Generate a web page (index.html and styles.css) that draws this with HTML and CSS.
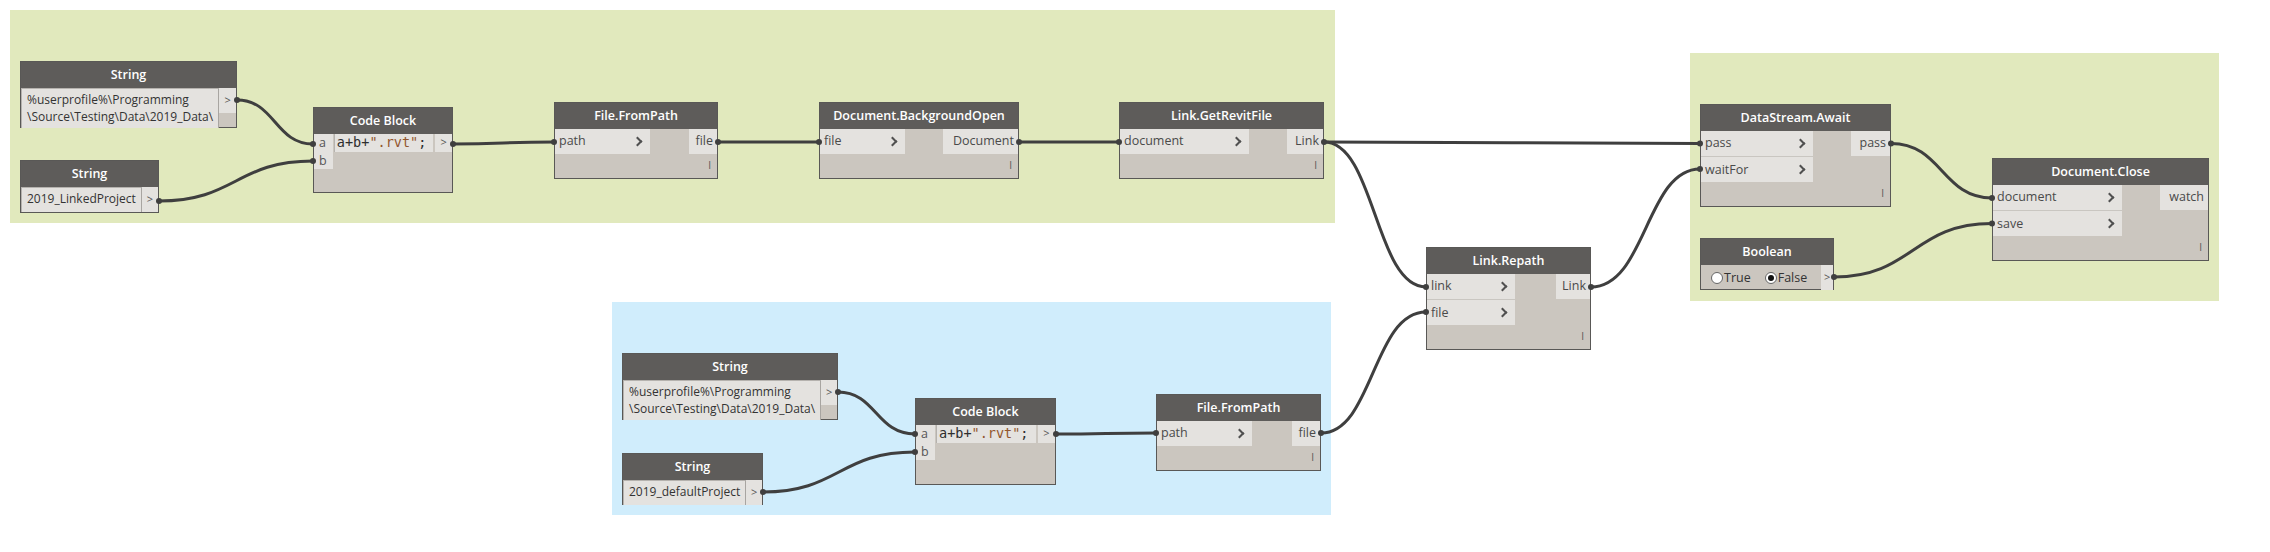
FILE: index.html
```html
<!DOCTYPE html>
<html lang="en">
<head>
    <meta charset="UTF-8">
    <title>Dynamo - Link Repath</title>
    <link rel="stylesheet" href="styles.css">
</head>
<body>
    <div class="canvas">
        <!-- groups -->
        <div class="group green group-main"></div>
        <div class="group green group-close"></div>
        <div class="group blue group-default"></div>

        <!-- wires -->
        <svg class="wires" width="2270" height="552" viewBox="0 0 2270 552">
            <g fill="none" stroke="#3f3f3f" stroke-width="3">
                <path d="M237 100 C275 100 275 144 313 144"/>
                <path d="M159 201 C236 201 236 161 313 161"/>
                <path d="M453 144 C503 144 504 142 554 142"/>
                <path d="M718 142 L819 142"/>
                <path d="M1019 142 L1119 142"/>
                <path d="M1324 142 C1512 142 1512 143.5 1700 143.5"/>
                <path d="M1324 142 C1375 142 1375 287 1426 287"/>
                <path d="M1321 433 C1373 433 1373 312 1426 312"/>
                <path d="M1591 287 C1646 287 1646 169 1700 169"/>
                <path d="M1891 143.5 C1942 143.5 1942 198 1992 198"/>
                <path d="M1834 277 C1913 277 1913 223.5 1992 223.5"/>
                <path d="M838 392 C876 392 876 434 915 434"/>
                <path d="M763 492 C839 492 839 452 915 452"/>
                <path d="M1056 434 C1106 434 1106 433 1156 433"/>
            </g>
        </svg>

        <!-- top row -->
        <div class="node str1">
            <div class="node-title">String</div>
            <div class="str-body">
                <div class="str-value">%userprofile%\Programming<br>\Source\Testing\Data\2019_Data\</div>
                <div class="str-out"><span>&gt;</span></div>
            </div>
        </div>

        <div class="node str2">
            <div class="node-title">String</div>
            <div class="str-body">
                <div class="str-value">2019_LinkedProject</div>
                <div class="str-out"><span>&gt;</span></div>
            </div>
        </div>

        <div class="node cb1">
            <div class="node-title">Code Block</div>
            <div class="cb-body">
                <div class="cb-ports">
                    <div class="cb-port">a</div>
                    <div class="cb-port">b</div>
                </div>
                <div class="cb-code">a+b+<span class="str">".rvt"</span>;</div>
                <div class="cb-out">&gt;</div>
            </div>
        </div>

        <div class="node ffp1">
            <div class="node-title">File.FromPath</div>
            <div class="node-body">
                <div class="inputs">
                    <div class="port">path<i class="chev"></i></div>
                </div>
                <div class="outputs"><div class="port out">file</div></div>
            </div>
            <div class="node-foot">I</div>
        </div>

        <div class="node dbo">
            <div class="node-title">Document.BackgroundOpen</div>
            <div class="node-body">
                <div class="inputs">
                    <div class="port">file<i class="chev"></i></div>
                </div>
                <div class="outputs"><div class="port out">Document</div></div>
            </div>
            <div class="node-foot">I</div>
        </div>

        <div class="node lgrf">
            <div class="node-title">Link.GetRevitFile</div>
            <div class="node-body">
                <div class="inputs">
                    <div class="port">document<i class="chev"></i></div>
                </div>
                <div class="outputs"><div class="port out">Link</div></div>
            </div>
            <div class="node-foot">I</div>
        </div>

        <!-- middle -->
        <div class="node repath">
            <div class="node-title">Link.Repath</div>
            <div class="node-body">
                <div class="inputs">
                    <div class="port">link<i class="chev"></i></div>
                    <div class="port">file<i class="chev"></i></div>
                </div>
                <div class="outputs"><div class="port out">Link</div></div>
            </div>
            <div class="node-foot">I</div>
        </div>

        <!-- right group -->
        <div class="node await">
            <div class="node-title">DataStream.Await</div>
            <div class="node-body">
                <div class="inputs">
                    <div class="port">pass<i class="chev"></i></div>
                    <div class="port">waitFor<i class="chev"></i></div>
                </div>
                <div class="outputs"><div class="port out">pass</div></div>
            </div>
            <div class="node-foot">I</div>
        </div>

        <div class="node bool">
            <div class="node-title">Boolean</div>
            <div class="bool-body">
                <div class="bool-opts">
                    <span class="radio"></span><span class="opt">True</span>
                    <span class="radio on"></span><span class="opt">False</span>
                </div>
                <div class="bool-out">&gt;</div>
            </div>
        </div>

        <div class="node close">
            <div class="node-title">Document.Close</div>
            <div class="node-body">
                <div class="inputs">
                    <div class="port">document<i class="chev"></i></div>
                    <div class="port">save<i class="chev"></i></div>
                </div>
                <div class="outputs"><div class="port out">watch</div></div>
            </div>
            <div class="node-foot">I</div>
        </div>

        <!-- bottom group -->
        <div class="node str3">
            <div class="node-title">String</div>
            <div class="str-body">
                <div class="str-value">%userprofile%\Programming<br>\Source\Testing\Data\2019_Data\</div>
                <div class="str-out"><span>&gt;</span></div>
            </div>
        </div>

        <div class="node str4">
            <div class="node-title">String</div>
            <div class="str-body">
                <div class="str-value">2019_defaultProject</div>
                <div class="str-out"><span>&gt;</span></div>
            </div>
        </div>

        <div class="node cb2">
            <div class="node-title">Code Block</div>
            <div class="cb-body">
                <div class="cb-ports">
                    <div class="cb-port">a</div>
                    <div class="cb-port">b</div>
                </div>
                <div class="cb-code">a+b+<span class="str">".rvt"</span>;</div>
                <div class="cb-out">&gt;</div>
            </div>
        </div>

        <div class="node ffp2">
            <div class="node-title">File.FromPath</div>
            <div class="node-body">
                <div class="inputs">
                    <div class="port">path<i class="chev"></i></div>
                </div>
                <div class="outputs"><div class="port out">file</div></div>
            </div>
            <div class="node-foot">I</div>
        </div>

        <!-- port markers drawn over the node edges -->
        <svg class="wires" width="2270" height="552" viewBox="0 0 2270 552">
            <g fill="#3f3f3f">
                <circle cx="237" cy="100" r="3"/><circle cx="313" cy="144" r="3"/>
                <circle cx="159" cy="201" r="3"/><circle cx="313" cy="161" r="3"/>
                <circle cx="453" cy="144" r="3"/><circle cx="554" cy="142" r="3"/>
                <circle cx="718" cy="142" r="3"/><circle cx="819" cy="142" r="3"/>
                <circle cx="1019" cy="142" r="3"/><circle cx="1119" cy="142" r="3"/>
                <circle cx="1324" cy="142" r="3"/><circle cx="1700" cy="143.5" r="3"/>
                <circle cx="1426" cy="287" r="3"/><circle cx="1426" cy="312" r="3"/>
                <circle cx="1321" cy="433" r="3"/><circle cx="1591" cy="287" r="3"/>
                <circle cx="1700" cy="169" r="3"/><circle cx="1891" cy="143.5" r="3"/>
                <circle cx="1992" cy="198" r="3"/><circle cx="1834" cy="277" r="3"/>
                <circle cx="1992" cy="223.5" r="3"/><circle cx="838" cy="392" r="3"/>
                <circle cx="915" cy="434" r="3"/><circle cx="763" cy="492" r="3"/>
                <circle cx="915" cy="452" r="3"/><circle cx="1056" cy="434" r="3"/>
                <circle cx="1156" cy="433" r="3"/>
            </g>
        </svg>
    </div>
</body>
</html>
```

FILE: styles.css
```css
body {
    margin: 0;
    padding: 0;
    background: #ffffff;
    font-family: "Open Sans", "Noto Sans", sans-serif;
}

.canvas {
    position: relative;
    width: 2270px;
    height: 552px;
    overflow: hidden;
}

/* groups */
.group {
    position: absolute;
}

.green {
    background-color: #e1e9bd;
}

.blue {
    background-color: #d0edfc;
}

.group-main {
    left: 10px;
    top: 10px;
    width: 1325px;
    height: 213px;
}

.group-close {
    left: 1690px;
    top: 53px;
    width: 529px;
    height: 248px;
}

.group-default {
    left: 612px;
    top: 302px;
    width: 719px;
    height: 213px;
}

.wires {
    position: absolute;
    left: 0;
    top: 0;
    pointer-events: none;
}

/* nodes */
.node {
    position: absolute;
    box-sizing: border-box;
    background-color: #cbc6bf;
    border: 1px solid #595856;
    color: #444;
    font-size: 12.5px;
}

.node-title {
    height: 26px;
    line-height: 25px;
    background-color: #5e5c5a;
    color: #ffffff;
    font-weight: 600;
    font-size: 12.5px;
    text-align: center;
}

.node-body {
    display: flex;
    justify-content: space-between;
    align-items: flex-start;
}

.inputs {
    display: flex;
    flex-direction: column;
}

.port {
    position: relative;
    box-sizing: border-box;
    height: 25px;
    line-height: 24px;
    padding: 0 6px 0 4px;
    background-color: #e4e2df;
    color: #4a4a4a;
}

.inputs .port + .port {
    border-top: 1px solid #c9c6c1;
    height: 26px;
    line-height: 25px;
}

.port.out {
    text-align: right;
    padding: 0 4px 0 6px;
}

.chev {
    position: absolute;
    right: 9px;
    top: 9px;
    width: 5px;
    height: 5px;
    border-top: 2px solid #505050;
    border-right: 2px solid #505050;
    transform: rotate(45deg);
}

.node-foot {
    height: 24px;
    line-height: 22px;
    text-align: right;
    padding-right: 6px;
    font-size: 10px;
    color: #555;
}

/* string nodes */
.str-body {
    display: flex;
}

.str-value {
    flex: 1;
    box-sizing: border-box;
    background-color: #e4e2df;
    border-top: 1px solid #b5b2ae;
    border-left: 1px solid #b5b2ae;
    border-right: 1px solid #a8a5a1;
    padding: 2px 5px 0 5px;
    line-height: 17px;
    font-size: 12px;
    color: #333;
    white-space: nowrap;
}

.str-out {
    width: 19px;
    font-size: 11px;
    color: #555;
}

.str-out span {
    display: block;
    height: 25px;
    line-height: 23px;
    text-align: center;
    background-color: #e4e2df;
}

.str1 {
    left: 20px;
    top: 61px;
    width: 217px;
    height: 67px;
}

.str1 .str-value,
.str3 .str-value {
    height: 40px;
}

.str2 {
    left: 20px;
    top: 160px;
    width: 139px;
    height: 53px;
}

.str2 .str-value,
.str4 .str-value {
    height: 25px;
    line-height: 22px;
    padding-top: 0;
}

.str3 {
    left: 622px;
    top: 353px;
    width: 216px;
    height: 67px;
}

.str4 {
    left: 622px;
    top: 453px;
    width: 141px;
    height: 52px;
}

/* code blocks */
.cb-body {
    display: flex;
    align-items: flex-start;
}

.cb-ports {
    width: 19px;
}

.cb-port {
    height: 18px;
    line-height: 17px;
    padding-left: 5px;
    background-color: #e4e2df;
    color: #555;
    font-size: 12.5px;
}

.cb-port + .cb-port {
    height: 17px;
}

.cb-code {
    width: 100px;
    height: 18px;
    line-height: 17px;
    margin-left: 1px;
    padding-left: 2px;
    box-sizing: border-box;
    background-color: #e4e2df;
    border-left: 1px solid #b5b2ae;
    font-family: "DejaVu Sans Mono", "Liberation Mono", monospace;
    font-size: 13.5px;
    color: #2e2e2e;
    white-space: nowrap;
    overflow: hidden;
}

.cb-code .str {
    color: #93572e;
}

.cb-out {
    width: 17px;
    height: 18px;
    margin-left: 2px;
    line-height: 16px;
    text-align: center;
    background-color: #e4e2df;
    font-size: 11px;
    color: #555;
}

.cb1 {
    left: 313px;
    top: 107px;
    width: 140px;
    height: 86px;
}

.cb2 {
    left: 915px;
    top: 398px;
    width: 141px;
    height: 87px;
}

/* boolean */
.bool-body {
    display: flex;
    height: 25px;
}

.bool-opts {
    flex: 1;
    display: flex;
    align-items: center;
    padding-left: 10px;
    color: #333;
}

.radio {
    box-sizing: border-box;
    width: 12px;
    height: 12px;
    border: 1px solid #666;
    border-radius: 50%;
    background-color: #ffffff;
    position: relative;
}

.radio.on::after {
    content: "";
    position: absolute;
    left: 2px;
    top: 2px;
    width: 6px;
    height: 6px;
    border-radius: 50%;
    background-color: #111;
}

.opt {
    margin-left: 1px;
    margin-right: 14px;
}

.bool-out {
    width: 18px;
    line-height: 23px;
    text-align: center;
    background-color: #e4e2df;
    font-size: 11px;
    color: #555;
}

.bool {
    left: 1700px;
    top: 238px;
    width: 134px;
    height: 52px;
}

/* function nodes */
.ffp1 {
    left: 554px;
    top: 102px;
    width: 164px;
    height: 77px;
}

.ffp1 .inputs,
.ffp2 .inputs {
    width: 95px;
}

.dbo {
    left: 819px;
    top: 102px;
    width: 200px;
    height: 77px;
}

.dbo .inputs {
    width: 85px;
}

.dbo .port.out {
    width: 75px;
}

.lgrf {
    left: 1119px;
    top: 102px;
    width: 205px;
    height: 77px;
}

.lgrf .inputs {
    width: 129px;
}

.lgrf .port.out {
    width: 36px;
}

.repath {
    left: 1426px;
    top: 247px;
    width: 165px;
    height: 103px;
}

.repath .inputs {
    width: 88px;
}

.await {
    left: 1700px;
    top: 104px;
    width: 191px;
    height: 103px;
}

.await .inputs {
    width: 112px;
}

.await .port.out {
    width: 39px;
}

.close {
    left: 1992px;
    top: 158px;
    width: 217px;
    height: 103px;
}

.close .inputs {
    width: 129px;
}

.close .port.out {
    width: 48px;
}

.ffp2 {
    left: 1156px;
    top: 394px;
    width: 165px;
    height: 77px;
}
```
